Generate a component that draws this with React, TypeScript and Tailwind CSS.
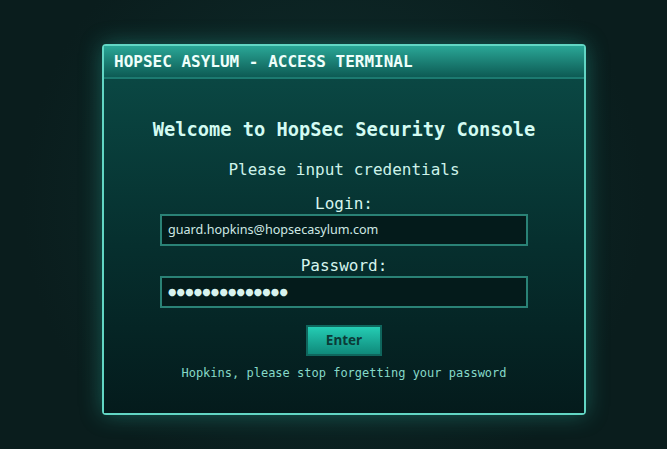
export default function App() {
  return (
    <div className="h-[449px] w-[667px] overflow-hidden bg-[radial-gradient(circle_at_50%_45%,_#0f2e2d,_#0a1d1d_75%)] pl-[102px] pt-[44px] font-['DejaVu_Sans_Mono',monospace]">
      <div className="w-[484px] rounded-[4px] border-2 border-[#62d6c4] shadow-[0_0_22px_rgba(45,200,180,0.35)]">
        {/* title bar */}
        <div className="flex h-[33px] items-center border-b-2 border-[#1c7a70] bg-gradient-to-b from-[#2aa797] to-[#0d5b54] px-[10px] text-[16px] font-bold tracking-normal text-[#effffb]">
          HOPSEC ASYLUM - ACCESS TERMINAL
        </div>

        <div className="flex flex-col items-center bg-gradient-to-b from-[#0a4743] via-[#062f2e] to-[#041b1c] pb-[32px] pt-[40px]">
          <h1 className="h-[22px] text-[18.7px] font-bold leading-[22px] text-[#d3fbf2]">
            Welcome to HopSec Security Console
          </h1>
          <p className="mt-[19px] h-[20px] text-[16px] leading-[20px] text-[#cdf3ea]">
            Please input credentials
          </p>

          <label className="mt-[14px] h-[20px] text-[16px] leading-[20px] text-[#d6f5ee]">Login:</label>
          <div className="flex h-[32px] w-[368px] items-center border-2 border-[#2a8276] bg-[#041b1b] px-[6px] font-['Noto_Sans',sans-serif] text-[12.6px] text-[#cfe9e4]">
            guard.hopkins@hopsecasylum.com
          </div>

          <label className="mt-[10px] h-[20px] text-[16px] leading-[20px] text-[#d6f5ee]">Password:</label>
          <div className="flex h-[32px] w-[368px] items-center border-2 border-[#2a8276] bg-[#041b1b] px-[6px] font-['DejaVu_Sans',sans-serif] text-[9.6px] tracking-[0.2px] text-[#d8f3ee]">
            ●●●●●●●●●●●●●●
          </div>

          <button className="mt-[17px] h-[31px] w-[76px] border-2 border-[#0f665d] bg-gradient-to-b from-[#25cdb4] to-[#0f8a7b] font-['Noto_Sans',sans-serif] text-[13.5px] font-bold text-[#0b3b37]">
            Enter
          </button>

          <p className="mt-[9px] h-[16px] text-[12px] leading-[16px] text-[#86d9c8]">
            Hopkins, please stop forgetting your password
          </p>
        </div>
      </div>
    </div>
  );
}
